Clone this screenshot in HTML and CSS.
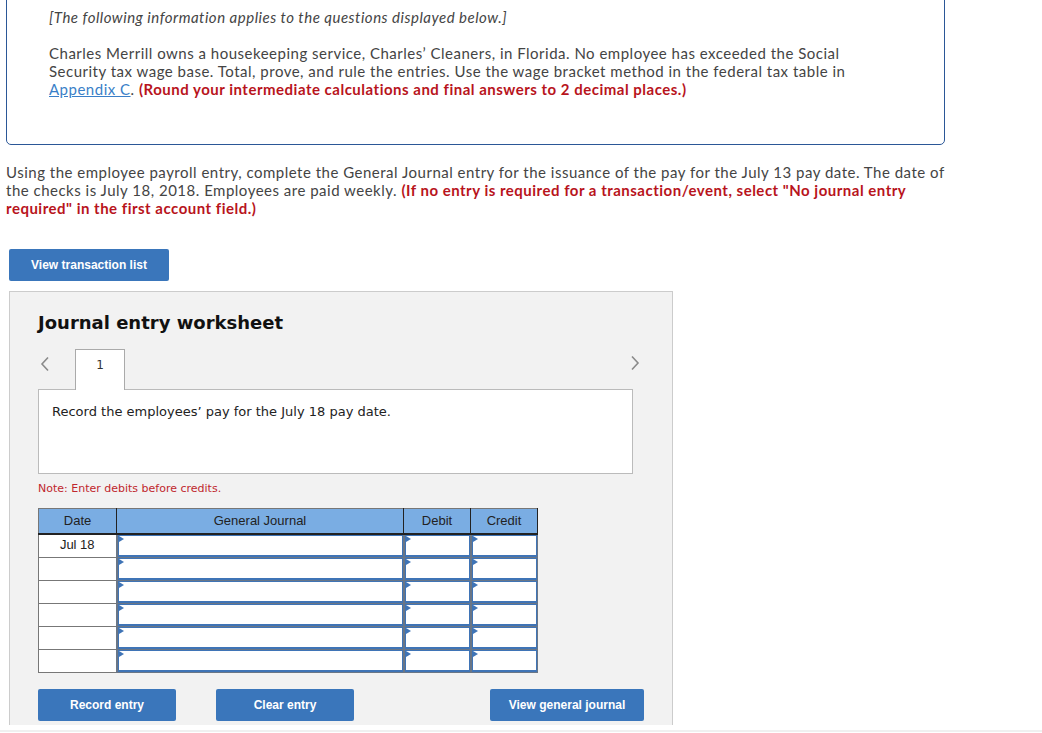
FILE: index.html
```html
<!DOCTYPE html>
<html>
<head>
<meta charset="utf-8">
<link rel="stylesheet" href="styles.css">
</head>
<body>
<div class="info-box">
  <p class="info-intro">[The following information applies to the questions displayed below.]</p>
  <p class="info-text">Charles Merrill owns a housekeeping service, Charles’ Cleaners, in Florida. No employee has exceeded the Social Security tax wage base. Total, prove, and rule the entries. Use the wage bracket method in the federal tax table in <a class="link" href="#">Appendix C</a>. <strong class="red">(Round your intermediate calculations and final answers to 2 decimal places.)</strong></p>
</div>

<p class="question">Using the employee payroll entry, complete the General Journal entry for the issuance of the pay for the July 13 pay date. The date of the checks is July 18, 2018. Employees are paid weekly. <strong class="red">(If no entry is required for a transaction/event, select "No journal entry required" in the first account field.)</strong></p>

<button class="btn btn-list">View transaction list</button>

<div class="panel">
  <h2 class="panel-title">Journal entry worksheet</h2>
  <div class="tabs">
    <span class="chev chev-left"><svg width="10" height="16" viewBox="0 0 10 16"><path d="M8 1.5 L2 8 L8 14.5" fill="none" stroke="#8a8a8a" stroke-width="1.6"/></svg></span>
    <div class="tab">1</div>
    <span class="chev chev-right"><svg width="10" height="16" viewBox="0 0 10 16"><path d="M2 1.5 L8 8 L2 14.5" fill="none" stroke="#8a8a8a" stroke-width="1.6"/></svg></span>
  </div>
  <div class="task">Record the employees’ pay for the July 18 pay date.</div>
  <p class="note">Note: Enter debits before credits.</p>
  <table class="journal">
    <thead>
      <tr><th class="c-date">Date</th><th class="c-acct">General Journal</th><th class="c-amt">Debit</th><th class="c-amt">Credit</th></tr>
    </thead>
    <tbody>
      <tr><td class="date">Jul 18</td><td class="in"><div class="field"></div></td><td class="in"><div class="field"></div></td><td class="in"><div class="field"></div></td></tr>
      <tr><td class="date"></td><td class="in"><div class="field"></div></td><td class="in"><div class="field"></div></td><td class="in"><div class="field"></div></td></tr>
      <tr><td class="date"></td><td class="in"><div class="field"></div></td><td class="in"><div class="field"></div></td><td class="in"><div class="field"></div></td></tr>
      <tr><td class="date"></td><td class="in"><div class="field"></div></td><td class="in"><div class="field"></div></td><td class="in"><div class="field"></div></td></tr>
      <tr><td class="date"></td><td class="in"><div class="field"></div></td><td class="in"><div class="field"></div></td><td class="in"><div class="field"></div></td></tr>
      <tr><td class="date"></td><td class="in"><div class="field"></div></td><td class="in"><div class="field"></div></td><td class="in"><div class="field"></div></td></tr>
    </tbody>
  </table>
  <div class="actions">
    <button class="btn btn-record">Record entry</button>
    <button class="btn btn-clear">Clear entry</button>
    <button class="btn btn-view">View general journal</button>
  </div>
</div>
<div class="bottom-line"></div>
</body>
</html>
```

FILE: styles.css
```css
html, body {
  margin: 0;
  padding: 0;
  background: #fff;
}
body {
  font-family: "Lato", "Open Sans", sans-serif;
  color: #444;
  font-size: 15px;
  letter-spacing: 0.5px;
  line-height: 18px;
  overflow: hidden;
  height: 733px;
}
.info-box {
  margin: -11px 0 0 6px;
  width: 895px;
  border: 1px solid #2b5797;
  border-radius: 0 0 5px 5px;
  padding: 18px 0 46px 42px;
}
.info-intro {
  margin: 0;
  font-style: italic;
}
.info-text {
  margin: 18px 0 0 0;
  width: 810px;
}
.link {
  color: #3a7fc8;
  text-decoration: underline;
}
.red {
  color: #b8141c;
  font-weight: bold;
}
.question {
  margin: 18px 0 0 6px;
  width: 950px;
}
.btn {
  display: block;
  border: 0;
  background: #3a76bb;
  color: #fff;
  font-family: "Liberation Sans", Arial, sans-serif;
  font-weight: bold;
  font-size: 12px;
  letter-spacing: 0;
  height: 32px;
  border-radius: 2px;
  padding: 0;
}
.btn-list {
  margin: 32px 0 0 9px;
  width: 160px;
}
.panel {
  margin: 10px 0 0 9px;
  height: 434px;
  background: #f2f2f2;
  border: 1px solid #cccccc;
  border-bottom: 0;
  padding: 0 0 0 28px;
  box-sizing: border-box;
  width: 664px;
  letter-spacing: 0;
}
.panel-title {
  margin: 20px 0 0 0;
  font-family: "DejaVu Sans", Verdana, sans-serif;
  font-size: 18px;
  line-height: 22px;
  font-weight: bold;
  color: #111;
}
.tabs {
  display: flex;
  align-items: flex-start;
  margin-top: 15px;
  width: 595px;
  height: 40px;
}
.chev {
  display: block;
  margin-top: 7px;
}
.chev-left {
  margin-left: 2px;
}
.chev-right {
  margin-left: auto;
  margin-right: -7px;
  margin-top: 6px;
}
.tab {
  margin-left: 25px;
  width: 50px;
  box-sizing: border-box;
  background: #fff;
  border: 1px solid #aaaaaa;
  border-bottom: 0;
  font-family: "DejaVu Sans", Verdana, sans-serif;
  font-size: 12px;
  color: #333;
  text-align: center;
  line-height: 30px;
  position: relative;
  z-index: 1;
  margin-bottom: -1px;
  height: 41px;
}
.task {
  width: 595px;
  height: 85px;
  box-sizing: border-box;
  background: #fff;
  border: 1px solid #bbbbbb;
  padding: 13px 13px;
  font-family: "DejaVu Sans", Verdana, sans-serif;
  font-size: 13px;
  line-height: 18px;
  color: #222;
}
.note {
  margin: 7px 0 0 0;
  font-family: "DejaVu Sans", Verdana, sans-serif;
  font-size: 11px;
  line-height: 16px;
  color: #c0272d;
}
.journal {
  margin-top: 11px;
  border-collapse: collapse;
  font-family: "Liberation Sans", Arial, sans-serif;
  font-size: 13px;
  color: #222;
}
.journal th {
  background: #7aade3;
  height: 24px;
  padding: 0;
  font-weight: normal;
  border: 1px solid #222;
  border-top: 1px solid #777;
  border-bottom: 2px solid #222;
}
.journal th:first-child {
  border-left: 1px solid #777;
}
.c-date { width: 77px; }
.c-acct { width: 286px; }
.c-amt { width: 66px; }
.journal td {
  height: 22px;
  padding: 0;
  border: 1px solid #777;
  background: #fff;
  vertical-align: top;
}
.journal td.date {
  text-align: center;
  line-height: 20px;
}
.journal td.in {
  border-left: 2px solid #6a7686;
  border-right: 1px solid #6a7686;
  border-top: 1px solid #6a7686;
  border-bottom: 1px solid #6a7686;
}
.field {
  position: relative;
  height: 19px;
  border: 1px solid #3f74b6;
  border-bottom: 2px solid #3f74b6;
  background: #fff;
}
.field::before {
  content: "";
  position: absolute;
  left: 0;
  top: 0;
  width: 0;
  height: 0;
  border-top: 3px solid transparent;
  border-bottom: 3px solid transparent;
  border-left: 5px solid #3f74b6;
}
.actions {
  display: flex;
  margin-top: 16px;
  width: 606px;
}
.btn-record { width: 138px; }
.btn-clear { width: 138px; margin-left: 40px; }
.btn-view { width: 154px; margin-left: auto; }
.bottom-line {
  margin-top: 5px;
  height: 2px;
  background: #f0f0f0;
}
```
